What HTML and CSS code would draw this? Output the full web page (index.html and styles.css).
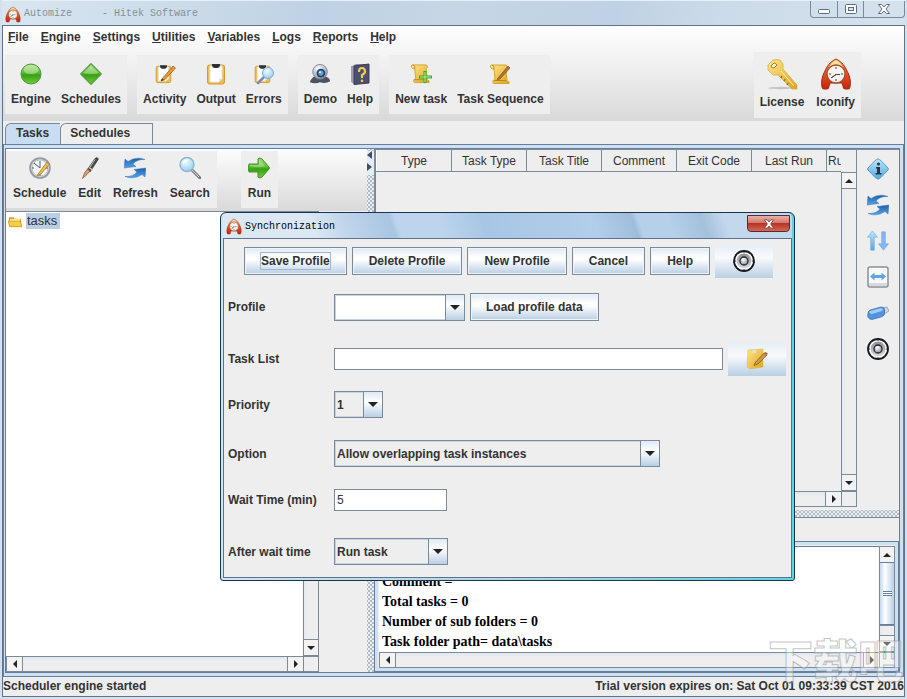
FILE: index.html
```html
<!DOCTYPE html>
<html lang="en">
<head>
<meta charset="utf-8">
<title>Automize - Hitek Software</title>
<link rel="stylesheet" href="styles.css">
</head>
<body>
<svg class="defs" aria-hidden="true">
  <defs>
    <linearGradient id="gGreen" x1="0" y1="0" x2="0" y2="1"><stop offset="0" stop-color="#a5e07c"/><stop offset=".45" stop-color="#5cba33"/><stop offset=".55" stop-color="#38a012"/><stop offset="1" stop-color="#6fcf3f"/></linearGradient>
    <linearGradient id="gGold" x1="0" y1="0" x2="1" y2="1"><stop offset="0" stop-color="#ffe78a"/><stop offset="1" stop-color="#dfa31e"/></linearGradient>
    <linearGradient id="gBlue" x1="0" y1="0" x2="0" y2="1"><stop offset="0" stop-color="#1d5fa8"/><stop offset="1" stop-color="#5aa2e4"/></linearGradient>
    <linearGradient id="gSky" x1="0" y1="0" x2="0" y2="1"><stop offset="0" stop-color="#bfe6fb"/><stop offset="1" stop-color="#4fa9e0"/></linearGradient>
    <linearGradient id="gRed" x1="0" y1="0" x2="0" y2="1"><stop offset="0" stop-color="#ffd88a"/><stop offset=".3" stop-color="#f0662f"/><stop offset="1" stop-color="#c9200c"/></linearGradient>
    <linearGradient id="gDisk" x1="0" y1="0" x2="0" y2="1"><stop offset="0" stop-color="#8b8d91"/><stop offset="1" stop-color="#dcdde0"/></linearGradient>
    <radialGradient id="gLens" cx=".4" cy=".3" r=".8"><stop offset="0" stop-color="#f4fbff"/><stop offset="1" stop-color="#8cc8ec"/></radialGradient>
    <radialGradient id="gSteel" cx=".4" cy=".3" r=".8"><stop offset="0" stop-color="#ffffff"/><stop offset="1" stop-color="#7d8794"/></radialGradient>
  </defs>
  <symbol id="rocket" viewBox="0 0 32 32"><path d="M16 1C22 4 25 8 27 13 30 18 31 24 30 29Q30 31 28 31H25Q23 31 23 28L22 25H10L9 28Q9 31 7 31H4Q2 31 2 29C1 24 2 18 5 13 7 8 10 4 16 1Z" fill="url(#gRed)" stroke="#9c2b12"/><path d="M16 2Q21 5 23 9Q16 4 9 9Q11 5 16 2Z" fill="#ffe39a"/><circle cx="16" cy="16" r="9" fill="#f7f3ee" stroke="#a0522d" stroke-width="1.3"/><path d="M16 9v2M16 21v2M9 16h2M21 16h2M11 20l5-3.500h4M16 16.500l-4 3" stroke="#444" fill="none"/></symbol>
  <symbol id="ball" viewBox="0 0 22 22"><circle cx="11" cy="11" r="10" fill="url(#gGreen)" stroke="#4b9a36"/><ellipse cx="11" cy="6.500" rx="7.500" ry="4.500" fill="#fff" opacity=".35"/></symbol>
  <symbol id="diamond" viewBox="0 0 22 22"><path d="M11 .8 21.200 11 11 21.200 .8 11Z" fill="url(#gGreen)" stroke="#5aa23f" stroke-width="1.500" stroke-linejoin="round"/><path d="M11 2 19 10Q11 12 3 10Z" fill="#fff" opacity=".3"/></symbol>
  <symbol id="clip" viewBox="0 0 22 22"><rect x="2.500" y="2" width="17" height="19" rx="2" fill="#edbd55" stroke="#d39c2c"/><path d="M5 3h12v13l-3 3H5Z" fill="#fff" stroke="#e9e4d6"/><path d="M17 16l-3 3v-3Z" fill="#ddd"/><path d="M7 1h8v2q-1 2-2.500 2h-3Q8 5 7 3Z" fill="#2c303a"/></symbol>
  <symbol id="activity" viewBox="0 0 22 22"><use href="#clip" width="19" height="22"/><path d="M8 16 19 3l2.500 2L11 16.500 7 18Z" fill="#e59a35" stroke="#8b5a21" stroke-width=".7"/><path d="M8 15.500 7 18l3-1Z" fill="#333"/></symbol>
  <symbol id="errors" viewBox="0 0 22 22"><use href="#clip" width="19" height="22"/><path d="M11 14 5 20" stroke="#7d88b5" stroke-width="2.500" stroke-linecap="round"/><circle cx="15" cy="10" r="5.500" fill="url(#gLens)" stroke="#76aedb"/></symbol>
  <symbol id="webcam" viewBox="0 0 24 22"><path d="M5 14Q1 18 1 20q6 2 11 0 6 2 11-1 0-3-4-5Z" fill="#4d525e"/><circle cx="12" cy="8.500" r="8" fill="url(#gSteel)" stroke="#858d99"/><circle cx="13" cy="10" r="4.800" fill="#23476f"/><circle cx="13" cy="10" r="2.800" fill="#5ba1dc"/><circle cx="12" cy="9" r="1" fill="#fff"/></symbol>
  <symbol id="book" viewBox="0 0 22 22"><path d="M3 3 7 1h13l-3 2Z" fill="#8d90a9"/><path d="M2 3h3v18l-3-2Z" fill="#9a9db5"/><path d="M5 3 20 1v19L5 21.500Z" fill="#4d4f6c" stroke="#3c3e58"/><path d="M10 9q0-4 3-4t3 3.500q0 2-3 3.500v3" fill="none" stroke="#f2cb4f" stroke-width="2.200"/><circle cx="13" cy="17.800" r="1.300" fill="#f2cb4f"/></symbol>
  <symbol id="scroll" viewBox="0 0 22 22"><path d="M2 2h15q2 1 1 3l-1 1 1 12q3 0 2 2.500H5q-2-.5-1-3L6 17 5 6H3Q0 4 2 2Z" fill="url(#gGold)" stroke="#d5a437"/><path d="M3 2q3 1 2 4M5 17.500h12" stroke="#b98622" fill="none"/></symbol>
  <symbol id="newtask" viewBox="0 0 22 22"><use href="#scroll" width="21" height="21"/><path d="M15 8v12M9 14h13" stroke="#3aa925" stroke-width="3"/><path d="M15 9v10M10 14h11" stroke="#b5f08f"/></symbol>
  <symbol id="sequence" viewBox="0 0 22 22"><use href="#scroll" width="22" height="22"/><path d="M9 15 19 3l2 2L11 16l-3 1Z" fill="#b66f33" stroke="#73502f" stroke-width=".6"/></symbol>
  <symbol id="key" viewBox="0 0 32 32"><ellipse cx="15" cy="30" rx="13" ry="1.200" fill="#c4c4c4"/><path d="M2 7 7 2q3-1 7 0l3 4v5l14 16v4h-5L12 17H7L2 12Z" fill="url(#gGold)" stroke="#d6a63c" stroke-width=".7"/><path d="M15 13 28 28" stroke="#fff2b4"/><path d="M5 8 8 5q2 0 3 2L8 10Q5 10 5 8Z" fill="#fff8dd" stroke="#ab7820"/><path d="M15 20l1-2M18 23l1-2M21 27l1-2" stroke="#9c7019" stroke-width="1.500"/></symbol>
  <symbol id="schedule" viewBox="0 0 22 22"><circle cx="11" cy="11" r="9.800" fill="#f7f8fa" stroke="#989ba3" stroke-width="2"/><circle cx="11" cy="11" r="8" fill="none" stroke="#b9c1ca"/><path d="M11 4v7M5 6l6 5M3 11h2M17 11h2M11 17v2" stroke="#555b68"/><path d="M9 17 18 5l2.500 2L12 17l-4 2Z" fill="#f1bd3e" stroke="#97702b" stroke-width=".7"/></symbol>
  <symbol id="pen" viewBox="0 0 22 22"><path d="M8 13 16 1.500 18 .5 19.500 2 11 15Z" fill="#4a474a" stroke="#333" stroke-width=".6"/><path d="M8.500 12 5.500 16l-2 5.500 4.500-4 3-3.500Z" fill="#d99f6f" stroke="#80563a" stroke-width=".7"/><path d="M16 2.500 11 10" stroke="#fff" opacity=".7"/><path d="M10 10.500l3 2" stroke="#f0c98f" stroke-width="1.500"/></symbol>
  <symbol id="refresh" viewBox="0 0 22 22"><path d="M1 2 4 4.500Q12-1 21 2.500 13 2 9 7l3 2.500L0 11Z" fill="url(#gBlue)" stroke="#347dbf" stroke-width=".5"/><path d="M21 20 18 17.500Q10 23 1 19.500 9 20 13 15l-3-2.500L22 11Z" fill="url(#gBlue)" stroke="#347dbf" stroke-width=".5"/></symbol>
  <symbol id="search" viewBox="0 0 22 22"><path d="M13 13 21 21" stroke="#747a84" stroke-width="3" stroke-linecap="round"/><path d="M13 13 20 20" stroke="#d5d8dd"/><circle cx="8" cy="7.500" r="7" fill="url(#gLens)" stroke="#86b4d2" stroke-width="1.300"/><path d="M4 7q1-4 5-4" fill="none" stroke="#fff" stroke-width="1.500"/></symbol>
  <symbol id="run" viewBox="0 0 22 22"><path d="M1 7h9V2q2-2 4 0l7 8q1 1 0 2l-7 8q-2 2-4 0v-5H1Q-.5 11 1 7Z" fill="url(#gGreen)" stroke="#3f9426"/><path d="M2 8h9V3l6 6Q12 11 2 9Z" fill="#fff" opacity=".3"/></symbol>
  <symbol id="folder" viewBox="0 0 16 14"><path d="M1 2h5l1 1.500h7V12H1Z" fill="#d8a11f"/><path d="M2 4h11v3H2Z" fill="#fff3bd"/><path d="M0 6h13l2 6H2Z" fill="#f8ce43" stroke="#c98f16" stroke-width=".7"/></symbol>
  <symbol id="info" viewBox="0 0 22 22"><path d="M11 .8 Q13 1 21 10q.8 1 0 2-8 9-10 9.200Q9 21 1 12q-.8-1 0-2Q9 1 11 .8Z" fill="url(#gSky)" stroke="#5a9cc6"/><circle cx="11.500" cy="6" r="1.500" fill="#2a3440"/><path d="M9 9h4v6h1.500v1.500h-6V15H10v-4.500H9Z" fill="#2a3440"/></symbol>
  <symbol id="updown" viewBox="0 0 24 22"><path d="M6 0l5.500 7H8v14H4V7H.5Z" fill="url(#gSky)" stroke="#6aa8e0" stroke-width=".6"/><path d="M18 21l-5.500-7H16V1h4v13h3.500Z" fill="#82b6f5" stroke="#6aa0e4" stroke-width=".6"/></symbol>
  <symbol id="width" viewBox="0 0 22 22"><rect x="1" y="1" width="20" height="20" rx="2" fill="#f6f8fa" stroke="#8b9098" stroke-width="1.500"/><path d="M2 17h18v3H2Z" fill="#d6d9de"/><path d="M3 10.500 7.500 6.500v2.500h7V6.500L19 10.500 14.500 14.500V12h-7v2.500Z" fill="#63a5e3"/></symbol>
  <symbol id="usb" viewBox="0 0 22 16"><path d="M15 3 20 2l2 4-5 3Z" fill="#d3d7dd" stroke="#8a9099" stroke-width=".7"/><path d="M3 5 14 2q3 0 3.500 2v5Q17 11 14 12L5 14.500Q0 14 .8 9 1 6 3 5Z" fill="#4f94dd" stroke="#2f6fb8" stroke-width=".7"/><path d="M3 6 14 3q3 1 1 3L5 9Q1 8 3 6Z" fill="#9fcaf5"/></symbol>
  <symbol id="gauge" viewBox="0 0 22 22"><circle cx="11" cy="11" r="10" fill="#fff" stroke="#15181d" stroke-width="1.800"/><circle cx="11" cy="11" r="7.500" fill="url(#gDisk)"/><circle cx="11" cy="11" r="4" fill="url(#gSteel)" stroke="#24262b" stroke-width="1.300"/><path d="M11 1v2M11 19v2M1 11h2M19 11h2" stroke="#222"/></symbol>
  <symbol id="note" viewBox="0 0 22 22"><path d="M2 2 17 1v18L4 21 1 19Z" fill="url(#gGold)" stroke="#e2b84f" stroke-width=".6"/><path d="M6 2h4v3H6Z" fill="#e9dfc4"/><path d="M9 15 18 5l3 2L12 16l-4 1.500Z" fill="#cf9a46" stroke="#76502b" stroke-width=".7"/><path d="M18 5l3 2 .8-1.500L19.500 4Z" fill="#c65145"/></symbol>
</svg>

<div class="window">
  <header class="titlebar">
    <svg class="i16"><use href="#rocket"/></svg>
    <span class="title">Automize     - Hitek Software</span>
    <div class="winbtns">
      <button aria-label="Minimize"><svg width="14" height="12" viewBox="0 0 14 12"><rect x="1.500" y="6.500" width="11" height="4" rx="1" fill="#fff" stroke="#5d6b7d"/></svg></button>
      <button aria-label="Maximize"><svg width="14" height="12" viewBox="0 0 14 12"><rect x="1.500" y="1.500" width="11" height="9" rx="1" fill="#fff" stroke="#5d6b7d"/><rect x="4.500" y="4.500" width="5" height="3" fill="#dfe7f0" stroke="#5d6b7d"/></svg></button>
      <button class="wide" aria-label="Close"><svg width="14" height="12" viewBox="0 0 14 12"><path d="M1.500 1.500h3L7 4l2.500-2.500h3L9 6l3.500 4.500h-3L7 8l-2.500 2.500h-3L5 6Z" fill="#fff" stroke="#5d6b7d"/></svg></button>
    </div>
  </header>

  <div class="client">
    <div class="head">
      <nav class="menubar">
        <a href="#"><u>F</u>ile</a><a href="#"><u>E</u>ngine</a><a href="#"><u>S</u>ettings</a><a href="#"><u>U</u>tilities</a><a href="#"><u>V</u>ariables</a><a href="#"><u>L</u>ogs</a><a href="#"><u>R</u>eports</a><a href="#"><u>H</u>elp</a>
      </nav>
      <div class="toolbar">
        <div class="group">
          <button><svg><use href="#ball"/></svg>Engine</button>
          <button><svg><use href="#diamond"/></svg>Schedules</button>
        </div>
        <div class="group">
          <button><svg><use href="#activity"/></svg>Activity</button>
          <button><svg><use href="#clip"/></svg>Output</button>
          <button><svg><use href="#errors"/></svg>Errors</button>
        </div>
        <div class="group">
          <button><svg><use href="#webcam"/></svg>Demo</button>
          <button><svg><use href="#book"/></svg>Help</button>
        </div>
        <div class="group">
          <button><svg><use href="#newtask"/></svg>New task</button>
          <button><svg><use href="#sequence"/></svg>Task Sequence</button>
        </div>
        <div class="group big">
          <button><svg><use href="#key"/></svg>License</button>
          <button><svg><use href="#rocket"/></svg>Iconify</button>
        </div>
      </div>
    </div>

    <div class="tabs" role="tablist">
      <button class="tab active" role="tab" aria-selected="true">Tasks</button>
      <button class="tab second" role="tab" aria-selected="false">Schedules</button>
    </div>

    <main class="panel">
      <div class="split">
        <section class="left">
          <div class="lefttools">
            <div class="group">
              <button><svg><use href="#schedule"/></svg>Schedule</button>
              <button><svg><use href="#pen"/></svg>Edit</button>
              <button><svg><use href="#refresh"/></svg>Refresh</button>
              <button><svg><use href="#search"/></svg>Search</button>
            </div>
            <div class="group">
              <button><svg><use href="#run"/></svg>Run</button>
            </div>
          </div>
          <div class="treepane">
            <div class="tree"><svg><use href="#folder"/></svg><span>tasks</span></div>
            <div class="sb v"><button class="up" aria-label="Scroll up"></button><div class="track"></div><button class="down" aria-label="Scroll down"></button></div>
            <div class="sb h"><button class="lt" aria-label="Scroll left"></button><div class="track"></div><button class="rt" aria-label="Scroll right"></button></div>
            <div class="corner"></div>
          </div>
        </section>

        <div class="vdivider"><i class="lt"></i><i class="rt"></i></div>

        <section class="right">
          <div class="upper">
            <div class="tablepane">
              <div class="tablehead">
                <table>
                  <thead><tr><th>Type</th><th>Task Type</th><th>Task Title</th><th>Comment</th><th>Exit Code</th><th>Last Run</th><th class="cut">Ru</th></tr></thead>
                </table>
              </div>
              <div class="headcorner"></div>
              <div class="tablebody"></div>
              <div class="sb v"><button class="up" aria-label="Scroll up"></button><div class="track"></div><button class="down" aria-label="Scroll down"></button></div>
              <div class="sb h"><button class="lt" aria-label="Scroll left"></button><div class="track"></div><button class="rt" aria-label="Scroll right"></button></div>
              <div class="corner"></div>
            </div>
            <div class="side">
              <button aria-label="Information"><svg><use href="#info"/></svg></button>
              <button aria-label="Refresh"><svg><use href="#refresh"/></svg></button>
              <button aria-label="Sort"><svg><use href="#updown"/></svg></button>
              <button aria-label="Fit width"><svg><use href="#width"/></svg></button>
              <button aria-label="Clear"><svg><use href="#usb"/></svg></button>
              <button aria-label="Options"><svg><use href="#gauge"/></svg></button>
            </div>
          </div>
          <div class="hdivider"></div>
          <div class="lower">
            <div class="infopane">
              <div class="info">
                <p>Name = tasks</p><p>Comment =</p><p>Total tasks = 0</p><p>Number of sub folders = 0</p><p>Task folder path= data\tasks</p>
              </div>
              <div class="sb v"><button class="up" aria-label="Scroll up"></button><div class="thumb"><i></i></div><div class="track"></div><button class="down" aria-label="Scroll down"></button></div>
              <div class="sb h"><button class="lt" aria-label="Scroll left"></button><div class="track"></div><button class="rt" aria-label="Scroll right"></button></div>
              <div class="corner"></div>
            </div>
          </div>
        </section>
      </div>
    </main>

    <footer class="status"><span>Scheduler engine started</span><span>Trial version expires on: Sat Oct 01 09:33:39 CST 2016</span></footer>
  </div>

  <div class="dialog" role="dialog" aria-labelledby="dlgtitle">
    <div class="dlgtitle">
      <svg class="i16"><use href="#rocket"/></svg>
      <span class="title" id="dlgtitle">Synchronization</span>
      <button class="close" aria-label="Close"><svg width="12" height="10" viewBox="0 0 14 12"><path d="M1.500 1h3.500l2 2.500L9 1h3.500L9 6l3.500 5H9L7 8.500 5 11H1.500L5 6Z" fill="#fff" stroke="#7b3b3b"/></svg></button>
    </div>
    <form class="form">
      <div class="actions">
        <button type="button" class="btn"><span class="focus">Save Profile</span></button>
        <button type="button" class="btn">Delete Profile</button>
        <button type="button" class="btn">New Profile</button>
        <button type="button" class="btn">Cancel</button>
        <button type="button" class="btn">Help</button>
        <button type="button" class="iconbtn" aria-label="Options"><svg><use href="#gauge"/></svg></button>
      </div>
      <div class="row"><label for="profile">Profile</label>
        <span class="combo white w-profile"><select id="profile"><option></option></select></span>
        <button type="button" class="btn">Load profile data</button></div>
      <div class="row"><label for="tasklist">Task List</label>
        <input id="tasklist" class="grow" type="text">
        <button type="button" class="iconbtn" aria-label="Edit task list"><svg><use href="#note"/></svg></button></div>
      <div class="row"><label for="priority">Priority</label>
        <span class="combo w-priority"><select id="priority"><option>1</option></select></span></div>
      <div class="row"><label for="option">Option</label>
        <span class="combo w-option"><select id="option"><option>Allow overlapping task instances</option></select></span></div>
      <div class="row"><label for="wait">Wait Time (min)</label>
        <input id="wait" class="w-wait" type="text" value="5"></div>
      <div class="row"><label for="after">After wait time</label>
        <span class="combo w-after"><select id="after"><option>Run task</option></select></span></div>
    </form>
  </div>

  <div class="watermark" lang="zh">下载吧</div>
</div>
</body>
</html>
```
FILE: styles.css
```css
* { box-sizing: border-box; }

:root {
  --line: #7a8a99;
  --edge: #63809f;
  --pale: #cfe0f1;
  --face: #eeeeee;
}

body {
  margin: 0;
  font: bold 12px/16px "Liberation Sans", Arial, sans-serif;
  color: #333;
}

button, input, select { font: inherit; color: inherit; margin: 0; }
button { background: none; border: 0; padding: 0; white-space: nowrap; }
a { color: inherit; text-decoration: none; }
p { margin: 0; }
.defs { position: absolute; width: 0; height: 0; }
svg { display: block; flex: none; }
.i16 { width: 16px; height: 17px; }

.window {
  position: relative;
  height: 100vh;
  min-height: 640px;
  display: flex;
  flex-direction: column;
  padding: 0 2px 2px;
  background: #d3e1ef;
  overflow: hidden;
}

.titlebar {
  display: flex;
  align-items: center;
  gap: 3px;
  height: 25px;
  padding: 2px 0 0 3px;
  border-top: 1px solid #e6f0f8;
  background: linear-gradient(100deg, #d9e6f2 0%, #cbdbe9 20%, #bfd1e4 35%, #c6d6e5 50%, #bfd1e4 68%, #ccdbe9 80%, #d5e2ee 100%);
}
.title {
  font: 10px/14px "Liberation Mono", monospace;
  white-space: pre;
  color: #888e96;
}
.winbtns {
  display: flex;
  align-self: flex-start;
  height: 17px;
  margin: -2px 0 0 auto;
  border: 1px solid #7a899c;
  border-top: 0;
  border-radius: 0 0 4px 4px;
}
.winbtns button { width: 26px; display: grid; place-items: center; }
.winbtns button + button { border-left: 1px solid #7a899c; }
.winbtns .wide { width: 41px; }

.client {
  flex: 1;
  min-height: 0;
  display: flex;
  flex-direction: column;
  border: 1px solid #5e7389;
  background: var(--face);
}
.head { background: linear-gradient(#ffffff 0%, #f4f4f4 30%, #d9d9d9 100%); }
.menubar { display: flex; gap: 12px; height: 22px; padding: 3px 5px; }
.toolbar { display: flex; align-items: center; gap: 10px; height: 73px; padding: 0 43px 0 2px; }
.group { display: flex; background: var(--face); padding: 6px 1px; }
.group button {
  display: flex;
  flex-direction: column;
  align-items: center;
  gap: 6px;
  padding: 2px 5px 0;
}
.group svg { width: 22px; height: 22px; }
.toolbar .group { height: 59px; }
.toolbar .group.big { margin-left: auto; height: 66px; padding: 4px 0; }
.group.big svg { width: 32px; height: 32px; }
.group.big button { gap: 4px; padding: 2px 6px 0; }

.tabs { display: flex; height: 23px; padding: 2px 2px 0; }
.tab {
  padding: 0 11px 2px 10px;
  text-align: left;
  border: 1px solid var(--line);
  border-bottom: 0;
  border-top-left-radius: 6px;
}
.tab.active { background: #c8ddf2; border-right: 0; }
.tab.second { width: 93px; padding: 0 0 2px 9px; }

.panel {
  flex: 1;
  min-height: 0;
  display: flex;
  padding: 3px 3px 3px 1px;
  border: 1px solid var(--edge);
  background: var(--pale);
}
.split {
  flex: 1;
  min-width: 0;
  display: flex;
  border: 1px solid var(--edge);
  background: var(--face);
}

.left { flex: 0 0 361px; display: flex; flex-direction: column; }
.lefttools {
  display: flex;
  gap: 24px;
  height: 62px;
  padding-top: 2px;
  background: linear-gradient(#fdfdfd, #d9d9d9);
}
.lefttools .group { height: 57px; padding: 4px 1px; }
.lefttools .group button { padding: 2px 6px 0; }
.treepane {
  flex: 1;
  display: grid;
  grid-template: 1fr 16px / 1fr 16px;
  margin-right: 48px;
  border-top: 1px solid var(--line);
}
.tree { display: flex; align-items: flex-start; gap: 3px; padding: 1px 2px; background: #fff; font-weight: normal; font-size: 13px; }
.tree svg { width: 15px; height: 14px; margin-top: 2px; }
.tree span { padding: 0 3px 0 1px; background: #b8cfe5; }

.sb { display: flex; background: var(--face); border: 1px solid var(--line); min-width: 0; min-height: 0; }
.sb.v { flex-direction: column; }
.sb.h { border-right: 0; }
.sb button { display: grid; place-items: center; flex: 0 0 15px; background: #f3f3f3; }
.sb button::before, .vdivider i::before { content: ""; border: 4px solid transparent; }
.sb .track { flex: 1; border: 0 solid var(--line); background: linear-gradient(90deg, #e3eaf2, #eee 4px); }
.sb.v .track { border-width: 1px 0; }
.sb.h .track { border-width: 0 1px; background: linear-gradient(#dfe7f0, #eee 4px); }
.sb .up::before { border-bottom-color: #222; border-top: 0; }
.sb .down::before { border-top-color: #222; border-bottom: 0; }
.sb .lt::before { border-right-color: #222; border-left: 0; }
.sb .rt::before { border-left-color: #222; border-right: 0; }
.sb .thumb {
  flex: 0 0 63px;
  display: grid;
  place-items: center;
  border: 1px solid var(--edge);
  border-width: 1px 0;
  background: linear-gradient(90deg, #c3d8ee, #fff 35%, #b8cfe5);
}
.thumb i { width: 9px; height: 5px; background: repeating-linear-gradient(#63809f 0 1px, #fff 1px 2px); }
.corner { background: var(--face); border: 1px solid var(--line); }

.vdivider, .hdivider {
  background-image: radial-gradient(#8fa2b8 20%, transparent 35%), radial-gradient(#8fa2b8 20%, transparent 35%);
  background-size: 4px 4px;
  background-position: 0 0, 2px 2px;
}
.vdivider { flex: 0 0 7px; display: flex; flex-direction: column; padding-top: 2px; }
.vdivider i { display: block; height: 12px; background: #e3edf7; }
.vdivider i::before { display: block; width: 0; border-width: 4px 5px; }
.vdivider .lt::before { border-right-color: #3d5068; border-left: 0; }
.vdivider .rt::before { border-left-color: #3d5068; border-right: 0; }

.right { flex: 1; min-width: 0; display: flex; flex-direction: column; }
.upper { flex: 1; min-height: 0; display: flex; }
.tablepane {
  flex: 1;
  min-width: 0;
  display: grid;
  grid-template: 22px 1fr 16px / minmax(0, 1fr) 16px;
  border-left: 2px solid #7d8a99;
  border-top: 1px solid #7d8a99;
}
.tablehead { overflow: hidden; border-bottom: 1px solid var(--line); }
table { width: 100%; border-collapse: collapse; table-layout: fixed; font-size: 12px; }
th {
  width: 75px;
  height: 21px;
  padding: 0;
  font-weight: normal;
  border-right: 1px solid var(--line);
  border-left: 1px solid #fff;
  white-space: nowrap;
  overflow: hidden;
}
th.cut { width: auto; text-align: left; padding-left: 1px; border-right: 0; }
.headcorner { border-right: 1px solid var(--line); }
.side { flex: 0 0 42px; display: flex; flex-direction: column; align-items: center; gap: 14px; padding-top: 8px; border-top: 1px solid #7d8a99; }
.side button, .side svg { width: 22px; height: 22px; }
.hdivider { flex: 0 0 7px; margin-top: 3px; }
.lower {
  flex: 0 0 155px;
  min-height: 0;
  display: flex;
  padding-top: 23px;
  border-top: 1px solid var(--line);
}
.infopane {
  flex: 1;
  min-width: 0;
  display: grid;
  grid-template: minmax(0, 1fr) 16px / minmax(0, 1fr) 16px;
  border: 1px solid var(--edge);
  outline: 3px solid var(--pale);
  outline-offset: -4px;
  padding: 4px 3px 3px 4px;
}
.info {
  display: flex;
  flex-direction: column;
  justify-content: flex-end;
  min-height: 0;
  overflow: hidden;
  padding: 0 3px;
  border-top: 1px solid var(--edge);
  background: #fff;
  color: #000;
  font: bold 14px/20px "Liberation Serif", "Times New Roman", serif;
}

.status { display: flex; justify-content: space-between; height: 19px; padding-top: 1px; white-space: nowrap; }

/* Dialog floats over the main window */
.dialog {
  position: absolute;
  left: 220px;
  top: 212px;
  width: 575px;
  padding: 0 2px 2px;
  border: 1px solid #17354d;
  border-radius: 6px 6px 3px 3px;
  background: linear-gradient(90deg, #cfe3f2, #a9d5e4 60%, #61d3e0);
}
.dlgtitle {
  display: flex;
  align-items: center;
  gap: 3px;
  height: 25px;
  padding: 2px 2px 0 3px;
  background: linear-gradient(70deg, #dbe8f4 0 16%, #c0d5ea 22%, #a9c5e2 30%, #bdd5ec 31% 38%, #a8c6e4 46%, #b3cdea 65%, #9fbddb 72%, #b7d0e9 73% 78%, #a4c0dc 84%, #c3d8ed 88%);
  border-radius: 5px 5px 0 0;
}
.dlgtitle .title { color: #000; }
.close {
  align-self: flex-start;
  display: grid;
  place-items: center;
  width: 43px;
  height: 17px;
  margin-left: auto;
  border: 1px solid #5b2a2f;
  border-radius: 0 0 4px 4px;
  background: linear-gradient(#e6b1a6 0%, #d4796a 45%, #b93225 50%, #cf6a55 100%);
}
.form {
  display: grid;
  grid-auto-rows: 34px;
  gap: 15px;
  align-items: start;
  padding: 5px 5px 5px 4px;
  border: 1px solid #5e7389;
  background: var(--face);
}
.actions { display: flex; align-items: center; gap: 5px; padding-left: 16px; }
.btn {
  height: 28px;
  padding: 0 15px;
  border: 1px solid var(--line);
  box-shadow: inset 0 0 0 1px #eef4fb;
  background: linear-gradient(#dfe9f4 0%, #ffffff 35%, #ffffff 45%, #b8cfe5 100%);
}
.actions .btn { padding: 0 16px; }
.focus { display: block; outline: 1px solid #a3b8cc; }
.iconbtn {
  display: grid;
  place-items: center;
  flex: 0 0 58px;
  height: 34px;
  background: linear-gradient(#e6edf5 0%, #f8fafc 40%, #b8cfe5 100%);
}
.iconbtn svg { width: 22px; height: 22px; }
.row { display: flex; align-items: center; gap: 5px; }
.row label { flex: 0 0 101px; white-space: nowrap; }
.row input { height: 22px; padding: 0 2px; border: 1px solid var(--line); background: #fff; font-weight: normal; }
.grow { flex: 1; min-width: 0; }
.combo { position: relative; display: flex; height: 27px; }
.combo select {
  appearance: none;
  width: 100%;
  padding: 0 20px 0 2px;
  border: 1px solid var(--line);
  border-radius: 0;
  box-shadow: inset 0 0 0 1px #c3d5e7;
  background: var(--face);
}
.combo.white select { background: #fff; }
.combo::before {
  content: "";
  position: absolute;
  inset: 1px 1px 1px auto;
  width: 18px;
  border-left: 1px solid var(--line);
  background: linear-gradient(#dfe9f4, #fff 40%, #b8cfe5);
  pointer-events: none;
}
.combo::after {
  content: "";
  position: absolute;
  right: 5px;
  top: 11px;
  border: 5px solid transparent;
  border-top-color: #222;
  border-bottom: 0;
  pointer-events: none;
}
.w-profile { width: 131px; }
.w-priority { width: 49px; }
.w-option { width: 326px; }
.w-wait { width: 113px; }
.w-after { width: 114px; }

.watermark {
  position: absolute;
  right: 4px;
  bottom: 21px;
  font: 900 45px/38px "Noto Sans CJK SC", sans-serif;
  color: rgba(255, 255, 255, .35);
  -webkit-text-stroke: 1px rgba(140, 145, 150, .55);
  pointer-events: none;
}
```
